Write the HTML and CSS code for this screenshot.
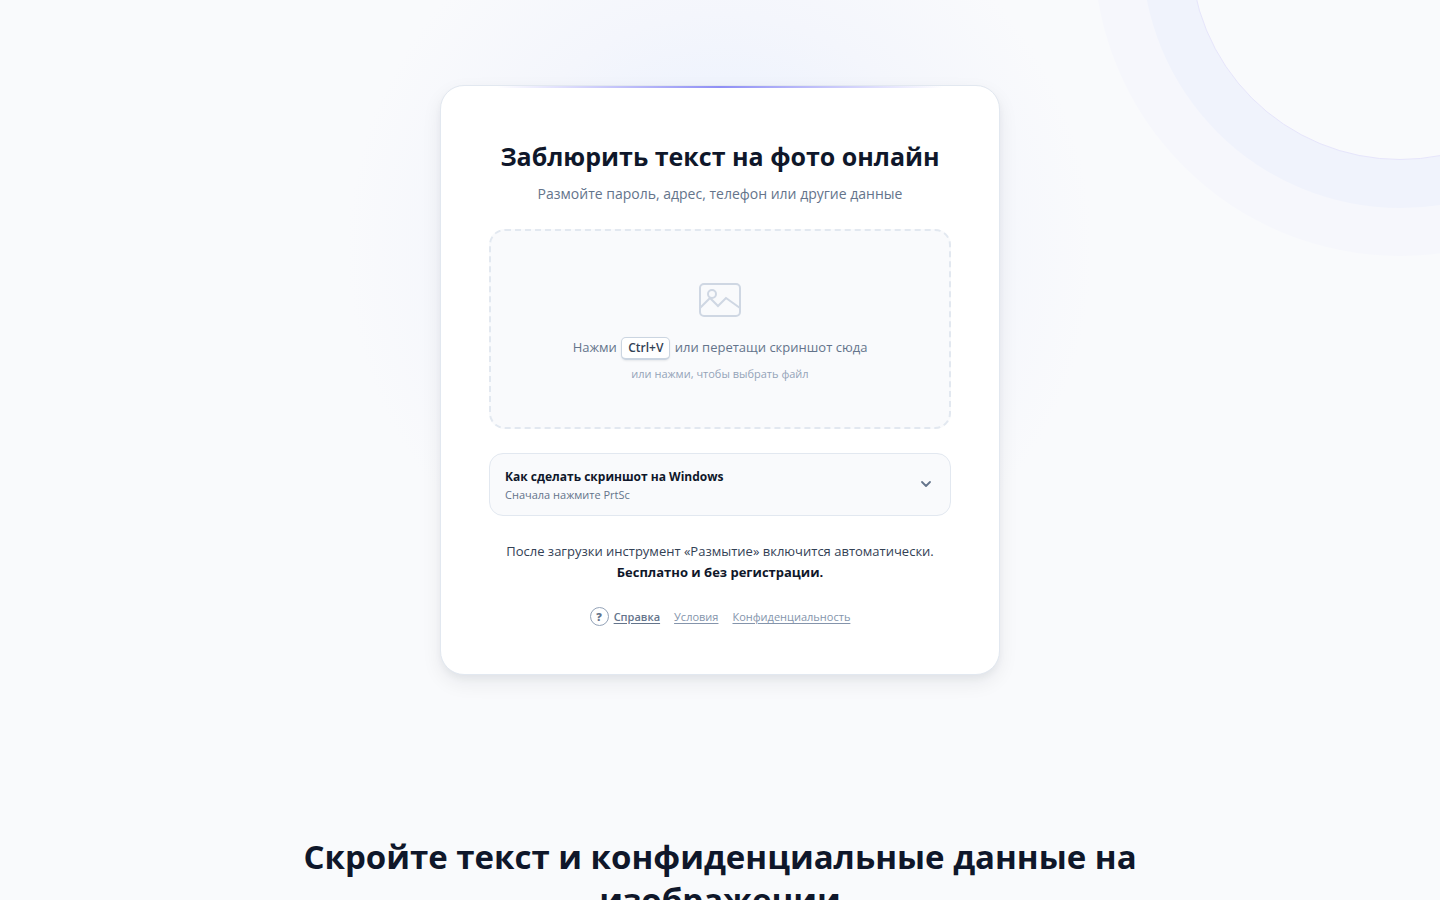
FILE: index.html
```html
<!DOCTYPE html>
<html lang="ru">
<head>
<meta charset="utf-8">
<meta name="viewport" content="width=device-width, initial-scale=1">
<title>Заблюрить текст на фото онлайн</title>
<link rel="stylesheet" href="styles.css">
</head>
<body>
<div class="backdrop" aria-hidden="true">
  <div class="glow"></div>
  <div class="rings"></div>
</div>
<main class="page">
  <section class="card">
    <h1 class="title">Заблюрить текст на фото онлайн</h1>
    <p class="subtitle">Размойте пароль, адрес, телефон или другие данные</p>
    <button class="dropzone" type="button">
      <svg class="picture" width="48" height="48" viewBox="0 0 48 48" fill="none" stroke="currentColor" stroke-width="2" aria-hidden="true">
        <rect x="4" y="8" width="40" height="32" rx="4"/>
        <circle cx="16" cy="18" r="4"/>
        <path d="M4 32l10-10 8 8 8-8 14 10"/>
      </svg>
      <span class="drop-main">Нажми <kbd class="key">Ctrl+V</kbd> или перетащи скриншот сюда</span>
      <span class="drop-hint">или нажми, чтобы выбрать файл</span>
    </button>
    <details class="guide">
      <summary class="guide-head">
        <span class="guide-text">
          <span class="guide-title">Как сделать скриншот на Windows</span>
          <span class="guide-sub">Сначала нажмите PrtSc</span>
        </span>
        <svg class="chevron" width="18" height="18" viewBox="0 0 18 18" fill="none" stroke="currentColor" stroke-width="1.8" stroke-linecap="round" stroke-linejoin="round" aria-hidden="true"><path d="M5 6l4 4 4-4"/></svg>
      </summary>
    </details>
    <p class="note">После загрузки инструмент «Размытие» включится автоматически.<br><strong class="note-strong">Бесплатно и без регистрации.</strong></p>
    <nav class="links">
      <a class="link help" href="#help"><span class="help-mark">?</span><span class="help-label">Справка</span></a>
      <a class="link" href="#terms">Условия</a>
      <a class="link" href="#privacy">Конфиденциальность</a>
    </nav>
  </section>
  <section class="about">
    <h2 class="about-title">Скройте текст и конфиденциальные данные на изображении</h2>
  </section>
</main>
</body>
</html>
```

FILE: styles.css
```css
* {
  box-sizing: border-box;
}

body {
  margin: 0;
  background: #f9fafc;
  color: #0f172a;
  font-family: "Segoe UI", "Open Sans", "Noto Sans", sans-serif;
}

h1,
h2,
p {
  margin: 0;
}

.backdrop {
  position: absolute;
  inset: 0;
  overflow: hidden;
  pointer-events: none;
}

.glow {
  position: absolute;
  top: -130px;
  left: 50%;
  width: 760px;
  height: 760px;
  margin-left: -380px;
  background: radial-gradient(circle closest-side, #ecf2fe 0%, #f0f4fd 45%, #f4f6fc 62%, #f9fafc 98%);
}

.rings {
  position: absolute;
  top: -260px;
  right: -170px;
  width: 420px;
  height: 420px;
  border: 1px solid #e6e5fb;
  border-radius: 50%;
  background: #f9fafc;
  box-shadow: 0 0 0 48px #f0f3fc, 0 0 0 96px #f6f7fc;
}

.page {
  position: relative;
  display: flex;
  flex-direction: column;
  align-items: center;
  padding: 85px 24px 80px;
}

.card {
  position: relative;
  width: 100%;
  max-width: 560px;
  padding: 48px;
  border: 1px solid #e2e8f0;
  border-radius: 24px;
  background: #fff;
  box-shadow: 0 4px 6px rgba(15, 23, 42, 0.04), 0 8px 20px rgba(15, 23, 42, 0.07);
  text-align: center;
}

.card::before {
  content: "";
  position: absolute;
  top: 0;
  left: 10%;
  right: 10%;
  height: 2px;
  background: linear-gradient(90deg, transparent, #8f8ff5, transparent);
}

.title {
  font-size: 25px;
  line-height: 44px;
}

.subtitle {
  margin: 4px 0 24px;
  color: #64748b;
  font-size: 14px;
  line-height: 23px;
}

.dropzone {
  display: flex;
  flex-direction: column;
  align-items: center;
  width: 100%;
  padding: 45px 16px 44px;
  border: 2px dashed #e2e8f0;
  border-radius: 16px;
  background: #f9fafc;
  color: #64748b;
  font: inherit;
  cursor: pointer;
}

.picture {
  margin-bottom: 11px;
  color: #cfd7e3;
}

.drop-main {
  font-size: 13px;
  line-height: 24px;
}

.key {
  display: inline-block;
  margin: 0 1px;
  padding: 0 6px;
  border: 1px solid #cbd5e1;
  border-bottom-width: 2px;
  border-radius: 5px;
  background: #fff;
  box-shadow: 0 1px 2px rgba(15, 23, 42, 0.08);
  color: #334155;
  font-family: inherit;
  font-size: 12px;
  font-weight: 600;
  line-height: 20px;
}

.drop-hint {
  margin-top: 4px;
  color: #94a3b8;
  font-size: 11px;
  line-height: 19px;
}

.guide {
  margin-top: 24px;
  border: 1px solid #e2e8f0;
  border-radius: 14px;
  background: #f9fafc;
  text-align: left;
}

.guide-head {
  display: flex;
  align-items: center;
  justify-content: space-between;
  padding: 12px 15px;
  list-style: none;
  cursor: pointer;
}

.guide-text {
  display: flex;
  flex-direction: column;
}

.guide-title {
  font-size: 12px;
  font-weight: 700;
  line-height: 21px;
}

.guide-sub {
  color: #64748b;
  font-size: 11px;
  font-weight: 500;
  line-height: 16px;
}

.chevron {
  color: #64748b;
}

.note {
  margin-top: 25px;
  color: #334155;
  font-size: 13px;
  line-height: 21px;
}

.note-strong {
  color: #0f172a;
}

.links {
  display: flex;
  align-items: center;
  justify-content: center;
  gap: 14px;
  margin-top: 24px;
}

.link {
  color: #8494ab;
  font-size: 11px;
  line-height: 19px;
  text-underline-offset: 2px;
}

.help {
  display: flex;
  align-items: center;
  gap: 5px;
  color: #64748b;
  font-weight: 600;
  text-decoration: none;
}

.help-mark {
  width: 19px;
  height: 19px;
  border: 1px solid #94a3b8;
  border-radius: 50%;
  font-weight: 800;
  line-height: 17px;
  text-align: center;
}

.help-label {
  text-decoration: underline;
  text-underline-offset: 2px;
}

.about {
  width: 100%;
  max-width: 880px;
  margin-top: 160px;
  text-align: center;
}

.about-title {
  font-size: 33px;
  line-height: 43px;
}
```
